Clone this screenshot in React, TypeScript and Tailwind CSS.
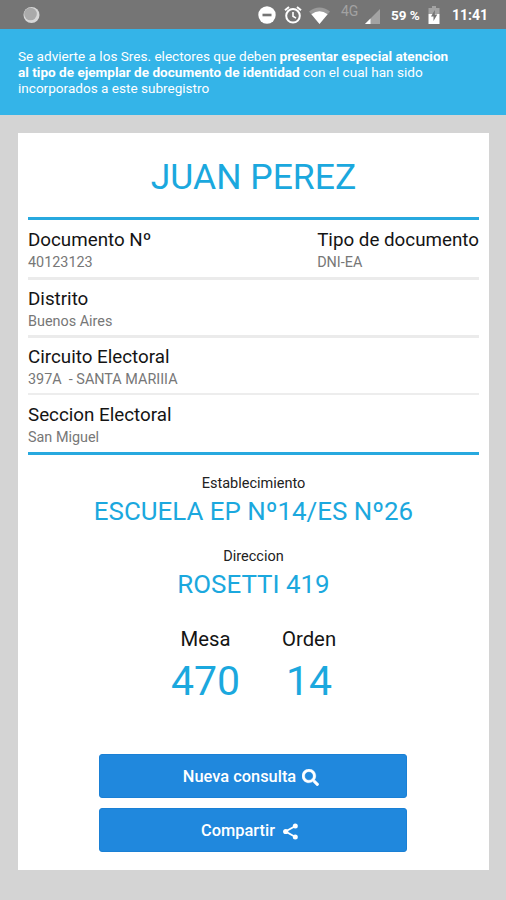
import { FaSearch } from 'react-icons/fa';

interface FieldProps {
    label: string;
    value: string;
}

const Field = ({ label, value }: FieldProps) => (
    <div className="whitespace-pre">
        <div className="text-[18.8px] leading-6 text-[#141414]">{label}</div>
        <div className="text-[14.4px] leading-[22px] text-[#777]">{value}</div>
    </div>
);

const ShareIcon = () => (
    <svg width="17" height="17" viewBox="0 0 17 17" fill="#fff">
        <path d="M13.5 3 3.5 8.5l10 5.5" fill="none" stroke="#fff" strokeWidth="1.9" />
        <circle cx="13.3" cy="3.1" r="2.5" />
        <circle cx="3.7" cy="8.5" r="2.6" />
        <circle cx="13.3" cy="13.9" r="2.5" />
    </svg>
);

const StatusBar = () => (
    <header className="flex h-[29px] items-center bg-[#757575] pt-px pr-[18px] pl-[23px] text-white">
        <svg width="17" height="18" viewBox="0 0 17 18">
            <circle cx="8.5" cy="9" r="8" fill="#d8d8d8" />
            <circle cx="7.5" cy="8" r="6.3" fill="#aaa" />
        </svg>
        <svg className="ml-[218px]" width="18" height="18" viewBox="0 0 18 18">
            <circle cx="9" cy="9" r="8.7" fill="#fff" />
            <rect x="4.5" y="7.7" width="9" height="2.6" fill="#757575" />
        </svg>
        <svg className="ml-[8px]" width="18" height="18" viewBox="0 0 18 18" fill="none" stroke="#fff" strokeWidth="2">
            <circle cx="9" cy="9.8" r="6.8" />
            <path d="M1 4.3 5 1M13 1l4 3.3" />
            <path d="M9 6v4.3l3 1.8" strokeWidth="1.6" />
        </svg>
        <svg className="ml-[7px]" width="21" height="17" viewBox="0 0 21 17">
            <path d="M0 4.5Q10.5-3.5 21 4.5L10.5 17Z" fill="#9a9a9a" />
            <path d="M2.4 7.2Q10.5 1.5 18.6 7.2L10.5 17Z" fill="#fff" />
        </svg>
        <span className="mb-[8px] ml-[11px] w-[18px] text-[14px] leading-4 text-[#a2a2a2]">4G</span>
        <svg className="mt-[2px] ml-[6px]" width="15" height="15" viewBox="0 0 15 15">
            <path d="M15 0v15H0Z" fill="#a3a3a3" />
            <path d="M5.5 9.5V15H0Z" fill="#fff" />
        </svg>
        <span className="ml-[11px] w-[30px] text-[13.5px] font-bold whitespace-nowrap">59 %</span>
        <svg className="ml-[7px]" width="12" height="18" viewBox="0 0 12 18">
            <path d="M4 0h4v2h3.5v6H.5V2H4Z" fill="#a3a3a3" />
            <path d="M.5 8h11v10H.5Z" fill="#fff" />
            <path d="M6.8 4 3 10.5h2.5V15L9.3 8.5H6.8Z" fill="#757575" />
        </svg>
        <span className="ml-auto text-[14px] font-bold">11:41</span>
    </header>
);

export default function App() {
    return (
        <div className="min-h-[900px] w-[506px] bg-[#d4d4d4] font-['Roboto',sans-serif]">
            <StatusBar />

            <div className="h-[86px] bg-[#34b4e8] px-[18px] pt-[19px] text-[13.57px] leading-4 whitespace-nowrap text-white">
                <p>Se advierte a los Sres. electores que deben <b>presentar especial atencion</b></p>
                <p><b>al tipo de ejemplar de documento de identidad</b> con el cual han sido</p>
                <p>incorporados a este subregistro</p>
            </div>

            <main className="mx-[18px] mt-[18px] mr-[17px] h-[737px] bg-white px-[10px]">
                <h1 className="h-[84px] pt-[22px] text-center text-[35.5px] leading-[44px] text-[#1ba8de]">JUAN PEREZ</h1>

                <section className="border-y-[3px] border-[#27a9df]">
                    <div className="flex h-[60px] justify-between border-b-[3px] border-[#ebebeb] pt-[8px]">
                        <Field label="Documento Nº" value="40123123" />
                        <Field label="Tipo de documento" value="DNI-EA" />
                    </div>
                    <div className="h-[58px] border-b-[3px] border-[#ebebeb] pt-[7px]">
                        <Field label="Distrito" value="Buenos Aires" />
                    </div>
                    <div className="h-[57px] border-b-[2px] border-[#ededed] pt-[7px]">
                        <Field label="Circuito Electoral" value="397A  - SANTA MARIIIA" />
                    </div>
                    <div className="h-[57px] pt-[8px]">
                        <Field label="Seccion Electoral" value="San Miguel" />
                    </div>
                </section>

                <section className="pt-[19px] text-center">
                    <div className="text-[14.5px] leading-5 text-[#222]">Establecimiento</div>
                    <div className="text-[25.9px] leading-[34px] text-[#1ba8de]">ESCUELA EP Nº14/ES Nº26</div>
                    <div className="mt-[19px] text-[14.5px] leading-5 text-[#222]">Direccion</div>
                    <div className="text-[25.9px] leading-[34px] text-[#1ba8de]">ROSETTI 419</div>
                </section>

                <section className="mt-[26px] flex justify-center gap-[42px] text-center">
                    <div>
                        <div className="text-[20.3px] leading-6 text-[#141414]">Mesa</div>
                        <div className="text-[41px] leading-[60px] text-[#1ba8de]">470</div>
                    </div>
                    <div>
                        <div className="text-[20.3px] leading-6 text-[#141414]">Orden</div>
                        <div className="text-[41px] leading-[60px] text-[#1ba8de]">14</div>
                    </div>
                </section>

                <div className="mt-[43px] ml-[71px] flex w-[308px] flex-col gap-[10px] text-[16.4px] font-medium text-white">
                    <button className="flex h-[44px] items-center justify-center gap-[6px] rounded-[3px] border border-[#1a80d5] bg-[#2088dd] pt-[3px] pr-[4px]">
                        Nueva consulta <FaSearch size={17} stroke="#fff" strokeWidth={10} />
                    </button>
                    <button className="flex h-[44px] items-center justify-center gap-[7px] rounded-[3px] border border-[#1a80d5] bg-[#2088dd] pt-[3px] pr-[6px]">
                        Compartir <ShareIcon />
                    </button>
                </div>
            </main>
        </div>
    );
}
